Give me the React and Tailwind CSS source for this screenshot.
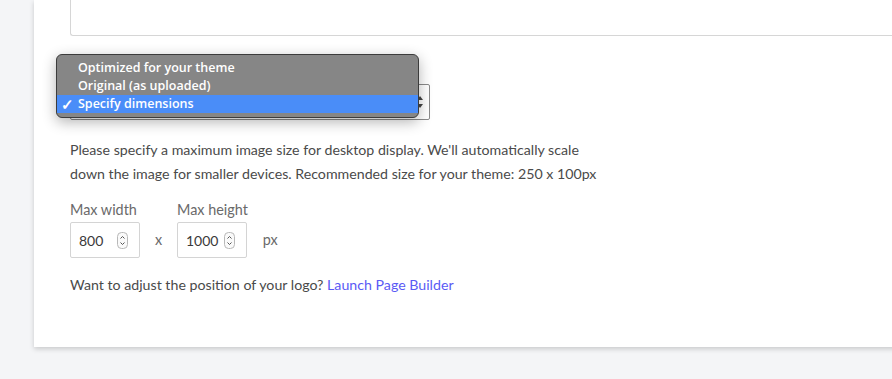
import React from "react";

function Spinner() {
  return (
    <svg width="11" height="17" viewBox="0 0 11 17" className="shrink-0">
      <rect x="0.5" y="0.5" width="10" height="16" rx="4" fill="#fafafa" stroke="#b8b8b8" />
      <path d="M3.5 6.5 L5.5 4.5 L7.5 6.5" fill="none" stroke="#555" strokeWidth="1" />
      <path d="M3.5 10.5 L5.5 12.5 L7.5 10.5" fill="none" stroke="#555" strokeWidth="1" />
    </svg>
  );
}

function NumInput({ value }) {
  return (
    <div className="flex h-[36px] w-[70px] items-center justify-between rounded-[2px] border border-[#d4d4d4] bg-white pl-[8px] pr-[11px]">
      <span className="text-[14px] text-[#3a3a3a]">{value}</span>
      <Spinner />
    </div>
  );
}

export default function App() {
  const font = { fontFamily: '"Source Sans Pro", Lato, "Open Sans", sans-serif' };
  return (
    <div className="h-[379px] w-[892px] overflow-hidden bg-[#f4f5f7] pl-[34px]" style={font}>
      <div className="w-[900px] bg-white pb-[52px] pl-[36px] shadow-[0_2px_5px_rgba(0,0,0,0.18)]">
        <div className="h-[36px] w-[900px] rounded-bl-[3px] border-b border-l border-[#d6d6d6]" />

        <div className="relative mt-[48px] h-[36px] w-[360px] rounded-[2px] border border-[#8a8a8a] bg-white">
          <svg width="8" height="16" viewBox="0 0 8 16" className="absolute right-[5px] top-[9px]">
            <path d="M1 6 L4 2 L7 6 Z" fill="#444" />
            <path d="M1 10 L4 14 L7 10 Z" fill="#444" />
          </svg>
          <div
            className="absolute left-[-15px] top-[-31px] w-[363px] rounded-[6px] border border-[#3c3c3c] bg-[#868686] pb-[4px] pt-[4px] shadow-[0_4px_14px_rgba(0,0,0,0.3)]"
            style={{ fontFamily: '"Open Sans", "Liberation Sans", sans-serif' }}
          >
            <div className="flex h-[18px] items-center pl-[21px] text-[12.5px] font-semibold text-white">Optimized for your theme</div>
            <div className="flex h-[18px] items-center pl-[21px] text-[12.5px] font-semibold text-white">Original (as uploaded)</div>
            <div className="relative flex h-[18px] items-center bg-[#4a8df8] pl-[21px] text-[12.5px] font-semibold text-white">
              <span className="absolute left-[4px] text-[15px] leading-none">✓</span>
              Specify dimensions
            </div>
          </div>
        </div>

        <p className="mt-[18px] whitespace-nowrap text-[14.2px] leading-[24px] text-[#4a4a4a]">
          Please specify a maximum image size for desktop display. We'll automatically scale
          <br />
          down the image for smaller devices. Recommended size for your theme: 250 x 100px
        </p>

        <div className="mt-[14px] flex items-end">
          <div className="flex flex-col">
            <span className="text-[14.4px] leading-[20px] text-[#6a6a6a]">Max width</span>
            <div className="mt-[2px]">
              <NumInput value="800" />
            </div>
          </div>
          <span className="flex h-[36px] w-[37px] items-center justify-center text-[14.4px] text-[#6a6a6a]">x</span>
          <div className="flex flex-col">
            <span className="text-[14.4px] leading-[20px] text-[#6a6a6a]">Max height</span>
            <div className="mt-[2px]">
              <NumInput value="1000" />
            </div>
          </div>
          <span className="ml-[15px] flex h-[36px] items-center text-[14.4px] text-[#6a6a6a]">px</span>
        </div>

        <p className="mt-[17px] text-[14.2px] leading-[20px] text-[#4a4a4a]">
          Want to adjust the position of your logo? <span className="text-[#5a5af5]">Launch Page Builder</span>
        </p>
      </div>
    </div>
  );
}
